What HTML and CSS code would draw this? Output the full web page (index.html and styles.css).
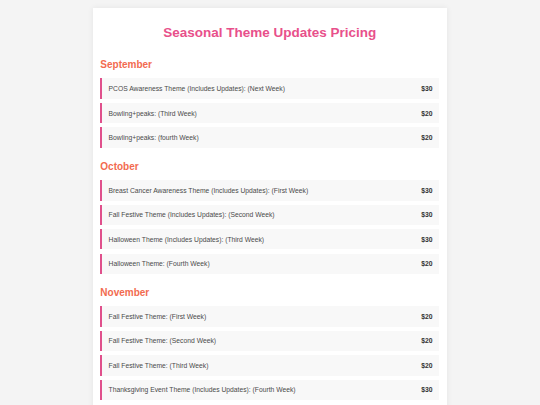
FILE: index.html
```html
<!DOCTYPE html>
<html lang="en">
<head>
<meta charset="utf-8">
<title>Seasonal Theme Updates Pricing</title>
<link rel="stylesheet" href="styles.css">
</head>
<body>
<main class="card">
  <h1 class="title">Seasonal Theme Updates Pricing</h1>

  <section class="month">
    <h2 class="month-name">September</h2>
    <div class="row"><span class="item">PCOS Awareness Theme (Includes Updates): (Next Week)</span><span class="price">$30</span></div>
    <div class="row"><span class="item">Bowling+peaks: (Third Week)</span><span class="price">$20</span></div>
    <div class="row"><span class="item">Bowling+peaks: (fourth Week)</span><span class="price">$20</span></div>
  </section>

  <section class="month">
    <h2 class="month-name">October</h2>
    <div class="row"><span class="item">Breast Cancer Awareness Theme (Includes Updates): (First Week)</span><span class="price">$30</span></div>
    <div class="row"><span class="item">Fall Festive Theme (Includes Updates): (Second Week)</span><span class="price">$30</span></div>
    <div class="row"><span class="item">Halloween Theme (Includes Updates): (Third Week)</span><span class="price">$30</span></div>
    <div class="row"><span class="item">Halloween Theme: (Fourth Week)</span><span class="price">$20</span></div>
  </section>

  <section class="month">
    <h2 class="month-name">November</h2>
    <div class="row"><span class="item">Fall Festive Theme: (First Week)</span><span class="price">$20</span></div>
    <div class="row"><span class="item">Fall Festive Theme: (Second Week)</span><span class="price">$20</span></div>
    <div class="row"><span class="item">Fall Festive Theme: (Third Week)</span><span class="price">$20</span></div>
    <div class="row"><span class="item">Thanksgiving Event Theme (Includes Updates): (Fourth Week)</span><span class="price">$30</span></div>
  </section>
</main>
</body>
</html>
```

FILE: styles.css
```css
html, body {
  margin: 0;
  padding: 0;
}

body {
  background: #f4f4f4;
  font-family: "Liberation Sans", Arial, sans-serif;
  padding-top: 8px;
}

.card {
  width: 354px;
  box-sizing: border-box;
  margin: 0 auto;
  background: #ffffff;
  padding: 16.5px 7.7px 20px 7.3px;
  box-shadow: 0 0 6px rgba(0, 0, 0, 0.07);
}

.title {
  margin: 0 0 10.3px;
  font-size: 13.5px;
  line-height: 15.5px;
  font-weight: bold;
  text-align: center;
  color: #e8508b;
}

.month-name {
  margin: 0 0 8px;
  padding-top: 8.7px;
  font-size: 10px;
  line-height: 11.5px;
  font-weight: bold;
  color: #f26b50;
}

.row {
  display: flex;
  justify-content: space-between;
  align-items: center;
  height: 20.4px;
  box-sizing: border-box;
  padding: 0 6.7px 0 6.3px;
  margin-bottom: 4.1px;
  background: #f8f8f8;
  border-left: 2.7px solid #e0508c;
  font-size: 6.75px;
  color: #4a4a4a;
}

.price {
  font-weight: bold;
  color: #333333;
}
```
